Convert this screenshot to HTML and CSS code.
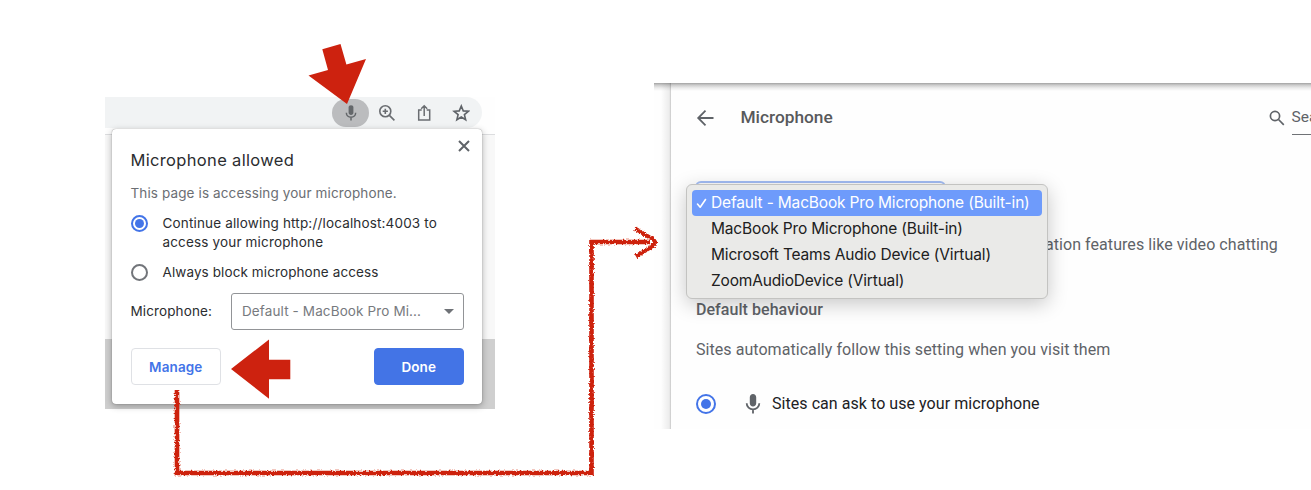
FILE: index.html
```html
<!DOCTYPE html>
<html lang="en">
<head>
<meta charset="utf-8">
<title>Microphone permission</title>
<link rel="stylesheet" href="styles.css">
</head>
<body>
<main class="board">
  <section class="browser">
    <div class="toolbar">
      <div class="address">
        <span class="mic-pill"><svg width="18" height="18" viewBox="0 0 24 24"><path fill="#64676a" d="M12 14.5c2 0 3.2-1.400 3.200-3.200V4.800C15.200 3 14 1.800 12 1.800S8.800 3 8.800 4.800v6.500c0 1.800 1.200 3.200 3.200 3.200z"/><path d="M5.800 11.500c0 3.600 2.700 6 6.200 6s6.200-2.400 6.200-6M12 17.500V22" fill="none" stroke="#64676a" stroke-width="2"/></svg></span>
        <svg width="18" height="18" viewBox="0 0 18 18"><g fill="none" stroke="#6a6d71" stroke-width="1.600"><circle cx="7.300" cy="7.300" r="5.500"/><path d="M11.400 11.400l5 5M4.700 7.300h5.200M7.300 4.700v5.200"/></g></svg>
        <svg width="18" height="18" viewBox="0 0 18 18"><g fill="none" stroke="#6a6d71" stroke-width="1.500"><path d="M6.700 6H3.700v10h11V6h-3M9.200 12V2M6.200 4.800l3-3 3 3"/></g></svg>
        <svg width="18" height="18" viewBox="0 0 18 18"><path d="M9.300 2l1.950 4.900 5.150.4-4 3.350 1.250 5.050-4.350-2.700-4.450 2.700 1.250-5.050-4-3.350 5.150-.4z" fill="none" stroke="#5f6368" stroke-width="1.600"/></svg>
      </div>
    </div>
    <div class="page"></div>
    <div class="page-footer"></div>
    <div class="dialog">
      <svg class="close" width="12" height="12" viewBox="0 0 12 12"><path d="M1 1l10 10M11 1L1 11" stroke="#5f6368" stroke-width="2"/></svg>
      <h1 class="dialog-title">Microphone allowed</h1>
      <p class="dialog-note">This page is accessing your microphone.</p>
      <div class="choice"><span class="radio radio-on"></span><span>Continue allowing http://localhost:4003 to<br>access your microphone</span></div>
      <div class="choice choice-block"><span class="radio"></span><span>Always block microphone access</span></div>
      <div class="device"><span class="device-label">Microphone:</span><div class="select"><span>Default - MacBook Pro Mi...</span><i class="caret"></i></div></div>
      <div class="actions"><div class="button">Manage</div><div class="button primary">Done</div></div>
    </div>
  </section>

  <section class="settings">
    <div class="gutter"></div>
    <div class="content">
      <header class="head">
        <svg width="18" height="18" viewBox="0 0 18 18"><path d="M17.500 9H2.500M9.500 1.700L2.200 9l7.300 7.300" fill="none" stroke="#5f6368" stroke-width="1.800"/></svg>
        <h2 class="head-title">Microphone</h2>
        <div class="search"><svg width="16" height="16" viewBox="0 0 16 16"><g fill="none" stroke="#5f6368" stroke-width="1.700"><circle cx="6" cy="6" r="4.600"/><path d="M9.500 9.500l5.300 5.300"/></g></svg><span class="search-field">Search</span></div>
      </header>
      <div class="focus-select"></div>
      <p class="explain">ation features like video chatting</p>
      <h3 class="behaviour">Default behaviour</h3>
      <p class="follow">Sites automatically follow this setting when you visit them</p>
      <div class="ask"><span class="radio radio-on big"></span><svg width="24" height="24" viewBox="0 0 24 24"><path fill="#5f6368" d="M12 14.500c1.900 0 3.200-1.300 3.200-3.200V5.200C15.200 3.300 13.900 2 12 2S8.800 3.300 8.800 5.200v6.100c0 1.900 1.300 3.200 3.200 3.200z"/><path d="M5.700 11.300c0 3.600 2.800 6.100 6.300 6.100s6.300-2.500 6.300-6.100M12 17.400V21.500" fill="none" stroke="#5f6368" stroke-width="1.800"/></svg><span>Sites can ask to use your microphone</span></div>
    </div>
    <ul class="menu">
      <li class="item active"><svg class="check" width="12" height="14" viewBox="0 0 12 14"><path d="M1.500 8l2.700 3.200L9.500 3.500" fill="none" stroke="#fff" stroke-width="1.600" stroke-linecap="round" stroke-linejoin="round"/></svg>Default - MacBook Pro Microphone (Built-in)</li>
      <li class="item">MacBook Pro Microphone (Built-in)</li>
      <li class="item">Microsoft Teams Audio Device (Virtual)</li>
      <li class="item">ZoomAudioDevice (Virtual)</li>
    </ul>
  </section>

  <svg class="marks" width="1311" height="490" viewBox="0 0 1311 490">
    <defs><filter id="chalk" filterUnits="userSpaceOnUse" x="165" y="215" width="505" height="275"><feTurbulence type="fractalNoise" baseFrequency="0.55" numOctaves="2" seed="4"/><feDisplacementMap in="SourceGraphic" scale="4" xChannelSelector="R" yChannelSelector="G"/></filter></defs>
    <path fill="#cd220f" d="M322.300 49.300L340.500 44l5.900 20.600 19.600-5.700L347 104 308.500 75.500l19.500-5.500z"/>
    <path fill="#cd220f" d="M231 369l38-29.500v20.300h21.300v19.500H269v19.500z"/>
    <g filter="url(#chalk)" fill="none" stroke="#cd220f" stroke-width="4.600"><path d="M177 390v83h414.500V242H650"/><path stroke-width="4" d="M635 228.500l14 8.500q11 5 2 10l-15 9.500"/></g>
  </svg>
</main>
</body>
</html>
```

FILE: styles.css
```css
* { box-sizing: border-box; }
body { margin: 0; background: #fff; }
h1, h2, h3, p, ul { margin: 0; padding: 0; }
svg { display: block; flex: none; }
span, p, li { white-space: nowrap; }
.board { position: relative; width: 1311px; height: 490px; overflow: hidden; display: flex; align-items: flex-start; gap: 159px; padding-left: 105px; }

.browser { position: relative; flex: none; width: 390px; height: 312px; margin-top: 97px; display: flex; flex-direction: column; font-family: Inter, Roboto, sans-serif; color: #2b2d30; letter-spacing: .12px; }
.toolbar { height: 38px; border-bottom: 1px solid #dcdddf; background: #fefefe; }
.address { width: 377px; height: 31px; border-radius: 0 16px 16px 0; background: #f1f3f4; display: flex; align-items: center; justify-content: flex-end; gap: 19px; padding-right: 12px; }
.mic-pill { width: 37px; height: 28px; border-radius: 14px; background: #bbbcbe; display: flex; align-items: center; justify-content: center; margin-right: -10px; }
.page { height: 204px; background: #f8f8f8; }
.page-footer { flex: 1; background: #cfcfcf; }
.dialog { position: absolute; left: 7px; top: 32px; width: 370px; height: 275px; border-radius: 4px; background: #fff; box-shadow: 0 0 1px rgba(0,0,0,.5), 0 2px 7px rgba(0,0,0,.3); padding: 20px 18px 0 18.500px; }
.close { position: absolute; right: 12.500px; top: 11px; }
.dialog-title { font-size: 16.500px; line-height: 22px; font-weight: 400; letter-spacing: .33px; }
.dialog-note { margin-top: 13px; font-size: 13.500px; line-height: 18px; color: #6b6e73; }
.choice { margin-top: 12px; display: flex; gap: 15px; font-size: 13.500px; line-height: 18.500px; align-items: flex-start; letter-spacing: .16px; }
.choice-block { margin-top: 11.500px; letter-spacing: .1px; }
.radio { flex: none; width: 17px; height: 17px; border-radius: 50%; border: 2px solid #72757a; margin-top: 1px; background: #fff; display: flex; align-items: center; justify-content: center; }
.radio-on { border-color: #4374e8; }
.radio-on::after { content: ""; width: 9px; height: 9px; border-radius: 50%; background: #4374e8; }
.device { margin-top: 11.500px; display: flex; align-items: center; font-size: 13.500px; }
.device-label { width: 100.500px; }
.select { width: 233px; height: 37px; border: 1px solid #929497; border-radius: 3px; display: flex; align-items: center; justify-content: space-between; padding: 0 9px 0 10px; color: #777a7e; }
.caret { border: 5px solid transparent; border-top-color: #6f7277; border-bottom: 0; }
.actions { margin-top: 18.500px; display: flex; justify-content: space-between; }
.button { width: 90.500px; height: 37px; border: 1px solid #dfe1e5; border-radius: 4px; display: flex; align-items: center; justify-content: center; font-size: 13.500px; font-weight: 600; color: #4374e8; }
.primary { background: #4374e6; border-color: #4374e6; color: #fff; }

.settings { position: relative; flex: none; width: 657px; height: 346px; margin-top: 83px; margin-left: -10px; left: 0; display: flex; font-family: Roboto, sans-serif; background: linear-gradient(#a2a2a2, #cbcbcb 2px, #ececec 5px, #fefefe 8px); color: #5f6368; }
.settings { margin-left: 0; }
.gutter { flex: none; width: 17px; background: linear-gradient(90deg, rgba(255,255,255,0) 40%, rgba(0,0,0,.07) 90%, rgba(0,0,0,.22)); }
.content { width: 640px; overflow: hidden; padding-left: 25px; }
.head { display: flex; align-items: center; height: 50px; margin-top: 10px; }
.head-title { flex: none; margin-left: 26.500px; font-size: 17.300px; font-weight: 500; line-height: 24px; color: #58595b; width: 528px; margin-top: -2px; }
.search { flex: none; display: flex; align-items: center; gap: 7px; font-size: 15.500px; }
.search-field { height: 33px; line-height: 31px; border-bottom: 1px solid #6f7276; width: 160px; }
.focus-select { width: 251px; height: 43px; margin: 38px 0 0 -1px; border: 2px solid #a3bdf5; border-radius: 6px; }
.explain { margin-top: 11px; padding-left: 349px; font-size: 16px; line-height: 20px; letter-spacing: .06px; }
.behaviour { margin-top: 45px; font-size: 16px; line-height: 20px; font-weight: 500; letter-spacing: .05px; }
.follow { margin-top: 19.500px; font-size: 16px; line-height: 20px; letter-spacing: .055px; }
.ask { margin-top: 32.500px; display: flex; align-items: center; font-size: 16px; line-height: 24px; color: #202124; gap: 7.500px; letter-spacing: .055px; }
.big { width: 20px; height: 20px; margin: 0 17px 0 0; }
.big::after { width: 10px; height: 10px; }
.menu { position: absolute; left: 32px; top: 101px; width: 362px; height: 115px; padding: 5px; list-style: none; border: 1px solid #c3c3c1; border-radius: 6px; background: #eaeae8; box-shadow: 0 5px 20px rgba(0,0,0,.22); font-family: Inter, Roboto, sans-serif; color: #202020; font-size: 15.500px; letter-spacing: -.17px; }
.item { height: 26px; line-height: 25px; padding-left: 19px; border-radius: 4px; position: relative; }
.active { background: #6e9bfb; color: #fff; }
.check { position: absolute; left: 4px; top: 6px; }
.marks { position: absolute; left: 0; top: 0; }
```
